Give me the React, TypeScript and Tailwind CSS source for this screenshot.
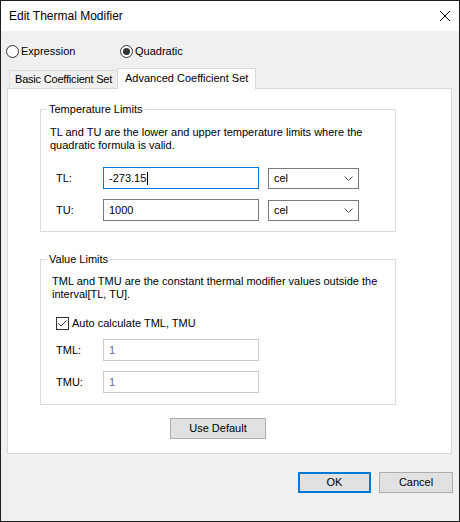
import type { ReactNode } from "react";

function Radio({ label, checked }: { label: string; checked?: boolean }) {
  return (
    <label className="flex items-center gap-[2px]">
      <span className="w-[13px] h-[13px] rounded-full border border-[#333333] bg-white flex items-center justify-center">
        {checked && <span className="w-[7px] h-[7px] rounded-full bg-[#333333]" />}
      </span>
      <span>{label}</span>
    </label>
  );
}

function GroupBox({
  title,
  className,
  children,
}: {
  title: string;
  className: string;
  children: ReactNode;
}) {
  return (
    <div className={`relative border border-[#dcdcdc] ${className}`}>
      <span className="absolute -top-[7px] left-[6px] bg-white px-[2px] leading-[13px]">
        {title}
      </span>
      {children}
    </div>
  );
}

function Combo({ value }: { value: string }) {
  return (
    <div className="ml-[9px] w-[91px] h-[21px] border border-[#7a7a7a] bg-white flex items-center justify-between pl-[5px] pr-[5px]">
      <span>{value}</span>
      <svg width="9" height="5" viewBox="0 0 9 5" className="text-[#606060]">
        <path d="M0.5 0.5 L4.5 4.5 L8.5 0.5" fill="none" stroke="currentColor" strokeWidth="1" />
      </svg>
    </div>
  );
}

function LimitRow({
  label,
  value,
  focused,
  disabled,
  unit,
}: {
  label: string;
  value: string;
  focused?: boolean;
  disabled?: boolean;
  unit?: string;
}) {
  const border = focused
    ? "border-[#0078d7]"
    : disabled
      ? "border-[#cccccc]"
      : "border-[#7a7a7a]";
  return (
    <div className="flex items-center h-[22px] pl-[15px]">
      <span className="w-[47px]">{label}</span>
      <div className={`w-[156px] h-[22px] border ${border} bg-white flex items-center pl-[5px]`}>
        <span className={disabled ? "text-[#6d6d80]" : "text-black"}>{value}</span>
        {focused && <span className="w-px h-[13px] bg-black ml-px" />}
      </div>
      {unit && <Combo value={unit} />}
    </div>
  );
}

function PushButton({ label, primary, className = "" }: { label: string; primary?: boolean; className?: string }) {
  return (
    <button
      className={`h-[21px] bg-[#e1e1e1] flex items-center justify-center ${
        primary ? "border-2 border-[#0078d7]" : "border border-[#adadad]"
      } ${className}`}
    >
      {label}
    </button>
  );
}

export default function App() {
  return (
    <div className="w-[460px] h-[522px] border border-[#1f1f1f] bg-[#f0f0f0] flex flex-col text-[11px] leading-[13px] text-black font-['Liberation_Sans',Arial,sans-serif]">
      {/* caption */}
      <div className="h-[30px] shrink-0 bg-white flex items-center justify-between pl-[8px] pr-[9px]">
        <span className="text-[12px]">Edit Thermal Modifier</span>
        <svg width="10" height="10" viewBox="0 0 10 10">
          <path d="M0 0 L10 10 M10 0 L0 10" stroke="#000" strokeWidth="1" />
        </svg>
      </div>

      {/* formula type */}
      <div className="mt-[14px] h-[13px] flex items-center pl-[5px]">
        <div className="w-[114px]">
          <Radio label="Expression" />
        </div>
        <Radio label="Quadratic" checked />
      </div>

      {/* tabs */}
      <div className="mt-[10px] ml-[8px] h-[20px] flex items-end">
        <div className="w-[108px] h-[18px] border-t border-l border-[#d9d9d9] flex items-center pl-[5px] whitespace-nowrap overflow-hidden tracking-[-0.2px]">
          Basic Coefficient Set
        </div>
        <div className="relative z-10 -mb-px w-[139px] h-[21px] bg-white border-t border-l border-r border-[#d9d9d9] flex items-center pl-[7px] pb-[2px] whitespace-nowrap">
          Advanced Coefficient Set
        </div>
      </div>

      <div className="ml-[6px] w-[445px] h-[366px] shrink-0 border border-[#d9d9d9] bg-white flex flex-col">
        <GroupBox title="Temperature Limits" className="mt-[20px] ml-[32px] w-[356px] h-[123px] pt-[16px]">
          <p className="pl-[9px] whitespace-nowrap">
            TL and TU are the lower and upper temperature limits where the
            <br />
            quadratic formula is valid.
          </p>
          <div className="mt-[15px] flex flex-col gap-[10px]">
            <LimitRow label="TL:" value="-273.15" unit="cel" focused />
            <LimitRow label="TU:" value="1000" unit="cel" />
          </div>
        </GroupBox>

        <GroupBox title="Value Limits" className="mt-[27px] ml-[32px] w-[356px] h-[146px] pt-[15px]">
          <p className="pl-[11px] whitespace-nowrap">
            TML and TMU are the constant thermal modifier values outside the
            <br />
            interval[TL, TU].
          </p>
          <label className="mt-[16px] ml-[15px] h-[13px] flex items-center gap-[3px]">
            <span className="w-[13px] h-[13px] border border-[#333333] bg-white flex items-center justify-center">
              <svg width="11" height="11" viewBox="0 0 11 11">
                <path d="M1.5 5.5 L4 8 L9.5 2.5" fill="none" stroke="#333" strokeWidth="1" />
              </svg>
            </span>
            <span>Auto calculate TML, TMU</span>
          </label>
          <div className="mt-[9px] flex flex-col gap-[10px]">
            <LimitRow label="TML:" value="1" disabled />
            <LimitRow label="TMU:" value="1" disabled />
          </div>
        </GroupBox>

        <div className="mt-[13px] ml-[32px] w-[356px] flex justify-center">
          <PushButton label="Use Default" className="w-[96px]" />
        </div>
      </div>

      <div className="mt-[18px] flex justify-end gap-[8px] pr-[6px]">
        <PushButton label="OK" primary className="w-[73px]" />
        <PushButton label="Cancel" className="w-[74px]" />
      </div>
    </div>
  );
}
